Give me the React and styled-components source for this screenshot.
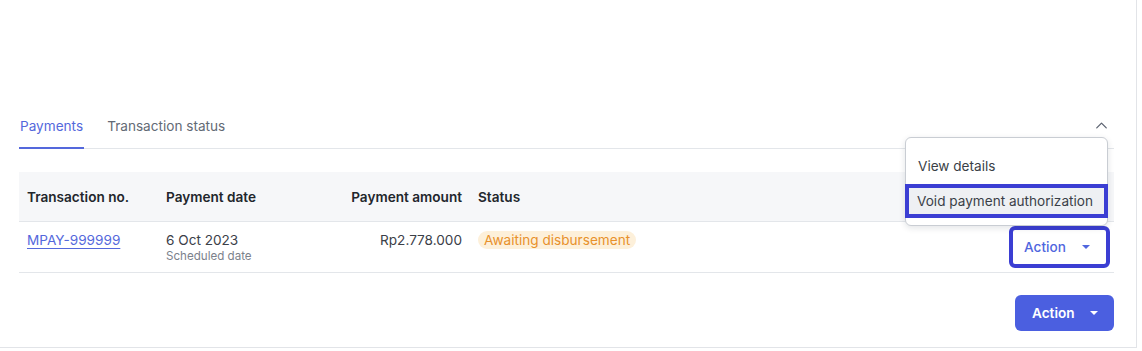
import React from 'react'
import styled, { createGlobalStyle } from 'styled-components'
import { ChevronUp } from 'lucide-react'

const GlobalStyle = createGlobalStyle`
  body {
    margin: 0;
    background: #ffffff;
    font-family: Inter, "Noto Sans", sans-serif;
  }
`

const Card = styled.div`
  width: 1137px;
  height: 348px;
  box-sizing: border-box;
  border-right: 1px solid #e2e4e8;
  border-bottom: 1px solid #e2e4e8;
  padding: 108px 22px 0 19px;
  background: #fff;
`

const TabBar = styled.div`
  display: flex;
  align-items: flex-end;
  border-bottom: 1px solid #e3e6ea;
  height: 41px;
  box-sizing: border-box;
`

const Tab = styled.div`
  font-size: 13.6px;
  color: ${p => (p.$active ? '#5468dc' : '#636a75')};
  padding: 0 1px 13px;
  margin-right: 22px;
  border-bottom: 2px solid ${p => (p.$active ? '#5468dc' : 'transparent')};
  margin-bottom: -1px;
`

const Toggle = styled.div`
  margin-left: auto;
  margin-right: 3px;
  padding-bottom: 13px;
  color: #5b6270;
  display: flex;
`

const Table = styled.div`
  margin-top: 23px;
  display: grid;
  grid-template-columns: 139px 150px 162px 1fr auto;
`

const HeadCell = styled.div`
  background: #f6f7f9;
  height: 50px;
  border-bottom: 1px solid #e3e6ea;
  box-sizing: border-box;
  display: flex;
  align-items: center;
  justify-content: ${p => (p.$right ? 'flex-end' : 'flex-start')};
  padding: 0 8px;
  font-size: 13.6px;
  font-weight: 600;
  color: #22262c;
`

const Cell = styled.div`
  height: 51px;
  border-bottom: 1px solid #e3e6ea;
  box-sizing: border-box;
  display: flex;
  flex-direction: column;
  align-items: ${p => (p.$right ? 'flex-end' : 'flex-start')};
  justify-content: flex-start;
  padding: 9px 8px 0;
  font-size: 13.6px;
  line-height: 18px;
  color: #3b4048;
`

const ActionCell = styled(Cell)`
  align-items: flex-end;
  justify-content: center;
  padding: 0 8px 1px;
`

const Link = styled.a`
  color: #5468dc;
  text-decoration: underline;
  text-underline-offset: 3px;
`

const SubText = styled.span`
  font-size: 11.6px;
  line-height: 15px;
  color: #7c828c;
`

const Badge = styled.span`
  background: #fdf0da;
  color: #e8912b;
  border-radius: 10px;
  padding: 0 6px;
  line-height: 18px;
`

const ActionWrap = styled.div`
  position: relative;
`

const OutlineButton = styled.button`
  width: 93px;
  height: 34px;
  background: #fff;
  border: none;
  outline: 4px solid #3b3ed3;
  border-radius: 2px;
  display: flex;
  align-items: center;
  padding: 0 0 0 11px;
  gap: 16px;
  font-family: inherit;
  font-size: 13.6px;
  font-weight: 500;
  color: #5066de;
`

const Caret = styled.span`
  width: 0;
  height: 0;
  border-left: 4px solid transparent;
  border-right: 4px solid transparent;
  border-top: 4px solid currentColor;
`

const Menu = styled.div`
  position: absolute;
  right: -2px;
  bottom: calc(100% + 4px);
  width: 203px;
  box-sizing: border-box;
  background: #fff;
  border: 1px solid #c9cdd3;
  border-radius: 6px;
  box-shadow: 0 2px 6px rgba(20, 30, 50, 0.12);
  padding: 11px 0 7px;
  display: flex;
  flex-direction: column;
  gap: 1px;
  z-index: 2;
`

const MenuItem = styled.div`
  height: 34px;
  box-sizing: border-box;
  display: flex;
  align-items: center;
  padding-left: 12px;
  font-size: 13.6px;
  color: #3a3f47;
  white-space: nowrap;
  background: ${p => (p.$focused ? '#eef0f3' : '#fff')};
  box-shadow: ${p => (p.$focused ? 'inset 0 0 0 4px #3b3ed3' : 'none')};
  margin: ${p => (p.$focused ? '0 -1px' : '0')};
`

const Footer = styled.div`
  display: flex;
  justify-content: flex-end;
  margin-top: 22px;
`

const PrimaryButton = styled.button`
  width: 99px;
  height: 36px;
  background: #4b5fe0;
  border: none;
  border-radius: 6px;
  color: #fff;
  font-family: inherit;
  font-size: 13.6px;
  font-weight: 600;
  display: flex;
  align-items: center;
  padding: 0 0 0 17px;
  gap: 15px;
`

const App = () => {
  return (
    <>
      <GlobalStyle />
      <Card>
        <TabBar>
          <Tab $active>Payments</Tab>
          <Tab>Transaction status</Tab>
          <Toggle>
            <ChevronUp size={19} strokeWidth={1.6} />
          </Toggle>
        </TabBar>

        <Table>
          <HeadCell>Transaction no.</HeadCell>
          <HeadCell>Payment date</HeadCell>
          <HeadCell $right>Payment amount</HeadCell>
          <HeadCell>Status</HeadCell>
          <HeadCell />

          <Cell>
            <Link href="#">MPAY-999999</Link>
          </Cell>
          <Cell>
            <span>6 Oct 2023</span>
            <SubText>Scheduled date</SubText>
          </Cell>
          <Cell $right>
            <span>Rp2.778.000</span>
          </Cell>
          <Cell>
            <Badge>Awaiting disbursement</Badge>
          </Cell>
          <ActionCell>
            <ActionWrap>
              <Menu>
                <MenuItem>View details</MenuItem>
                <MenuItem $focused>Void payment authorization</MenuItem>
              </Menu>
              <OutlineButton>
                Action
                <Caret />
              </OutlineButton>
            </ActionWrap>
          </ActionCell>
        </Table>

        <Footer>
          <PrimaryButton>
            Action
            <Caret />
          </PrimaryButton>
        </Footer>
      </Card>
    </>
  )
}

export default App
